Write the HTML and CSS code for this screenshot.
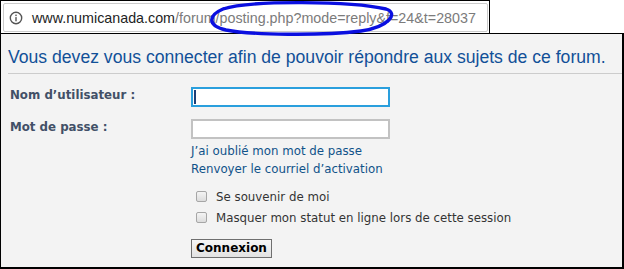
FILE: index.html
```html
<!DOCTYPE html>
<html lang="fr">
<head>
<meta charset="utf-8">
<title>Connexion</title>
<link rel="stylesheet" href="styles.css">
</head>
<body>
<div class="browser">
  <div class="urlbar">
    <svg class="info" viewBox="0 0 14 14" aria-hidden="true">
      <circle cx="7" cy="7" r="5.7" fill="none" stroke="#555" stroke-width="1.4"/>
      <rect x="6.3" y="6.1" width="1.4" height="4.2" fill="#555"/>
      <rect x="6.3" y="3.6" width="1.4" height="1.5" fill="#555"/>
    </svg>
    <span class="host">www.numicanada.com</span><span class="path">/forum/posting.php?mode=reply&amp;f=24&amp;t=28037</span>
  </div>
  <svg class="mark" width="490" height="36" viewBox="0 0 490 36" aria-hidden="true">
    <path d="M222 8 C250 -1, 350 0, 385 8 C398 12, 388 26, 360 30 C320 35, 250 34, 225 29 C205 24, 208 14, 222 8" fill="none" stroke="#0a0fe0" stroke-width="3.4" stroke-linecap="round"/>
  </svg>
</div>
<div class="panel">
  <h2 class="title">Vous devez vous connecter afin de pouvoir répondre aux sujets de ce forum.</h2>
  <div class="form">
    <div class="row first">
      <label class="label" for="username">Nom d’utilisateur :</label>
      <div class="field">
        <span class="inputwrap">
          <input class="text focus" id="username" type="text">
          <i class="caret"></i>
        </span>
      </div>
    </div>
    <div class="row">
      <label class="label" for="password">Mot de passe :</label>
      <div class="field">
        <input class="text" id="password" type="password">
        <div class="links">
          <a href="#">J’ai oublié mon mot de passe</a><br>
          <a href="#">Renvoyer le courriel d’activation</a>
        </div>
      </div>
    </div>
    <div class="options">
      <label class="opt"><input type="checkbox"><span>Se souvenir de moi</span></label>
      <label class="opt"><input type="checkbox"><span>Masquer mon statut en ligne lors de cette session</span></label>
    </div>
    <div class="actions">
      <button class="btn" type="button">Connexion</button>
    </div>
  </div>
</div>
</body>
</html>
```
FILE: styles.css
```css
html, body {
  margin: 0;
  padding: 0;
  background: #fff;
}
body {
  width: 624px;
}
.browser {
  position: relative;
  width: 490px;
  box-sizing: border-box;
  border: 1px solid #000;
  border-bottom: 0;
  padding: 2px 1px 1px 2px;
  background: #fff;
}
.urlbar {
  height: 29px;
  box-sizing: border-box;
  border: 1px solid #cbcbcb;
  border-radius: 2px;
  display: flex;
  align-items: center;
  font: 14.3px "Liberation Sans", Arial, sans-serif;
  white-space: nowrap;
  overflow: hidden;
}
.info {
  width: 14px;
  height: 14px;
  margin: 0 9px 0 5px;
  flex: none;
}
.host {
  color: #1e1e1e;
}
.path {
  color: #7b7b7b;
}
.mark {
  position: absolute;
  left: 0;
  top: 0;
  pointer-events: none;
  overflow: visible;
}
.panel {
  box-sizing: border-box;
  width: 624px;
  height: 236px;
  background: #f3f3f3;
  border: solid #000;
  border-width: 1px 2px 2px 1px;
}
.title {
  margin: 0 0 0 7px;
  padding: 13px 0 6px;
  border-bottom: 1px solid #cccccc;
  font: 17.6px/20px "Liberation Sans", Arial, sans-serif;
  font-weight: normal;
  color: #115098;
  white-space: nowrap;
}
.form {
  margin: 13px 0 0 9px;
  font-family: "DejaVu Sans", Verdana, sans-serif;
  font-size: 11.8px;
}
.row {
  display: grid;
  grid-template-columns: 181px 1fr;
  align-items: start;
}
.row + .row {
  margin-top: 12px;
}
.label {
  font-weight: bold;
  color: #425067;
  line-height: 16px;
}
.inputwrap {
  position: relative;
  display: block;
  width: 199px;
}
.text {
  display: block;
  box-sizing: border-box;
  width: 199px;
  height: 20px;
  margin: 0;
  padding: 0 3px;
  border: 2px solid #c2c2c2;
  background: #fff;
  outline: none;
  font: inherit;
}
.text.focus {
  border-color: #2a9fdd;
}
.caret {
  position: absolute;
  left: 3px;
  top: 3px;
  width: 1.5px;
  height: 14px;
  background: #1c3f78;
}
.links {
  margin-top: 3px;
  line-height: 18px;
}
.links a {
  color: #105289;
  text-decoration: none;
}
.options {
  margin: 8px 0 0 181px;
}
.opt {
  display: flex;
  align-items: center;
  height: 21px;
  color: #333;
}
.opt input {
  appearance: none;
  -webkit-appearance: none;
  box-sizing: border-box;
  width: 11px;
  height: 11px;
  margin: 0 9px 0 5px;
  border: 1px solid #a6a6a6;
  border-radius: 2px;
  background: linear-gradient(#f4f4f4, #dcdcdc);
}
.actions {
  margin: 11px 0 0 181px;
}
.btn {
  height: 19px;
  margin: 0;
  padding: 0 4px;
  border: 1px solid #6f6f6f;
  border-radius: 0;
  background: linear-gradient(#f6f6f6, #e2e2e2);
  color: #000;
  font: bold 12px "DejaVu Sans", Verdana, sans-serif;
  line-height: 17px;
}
```
